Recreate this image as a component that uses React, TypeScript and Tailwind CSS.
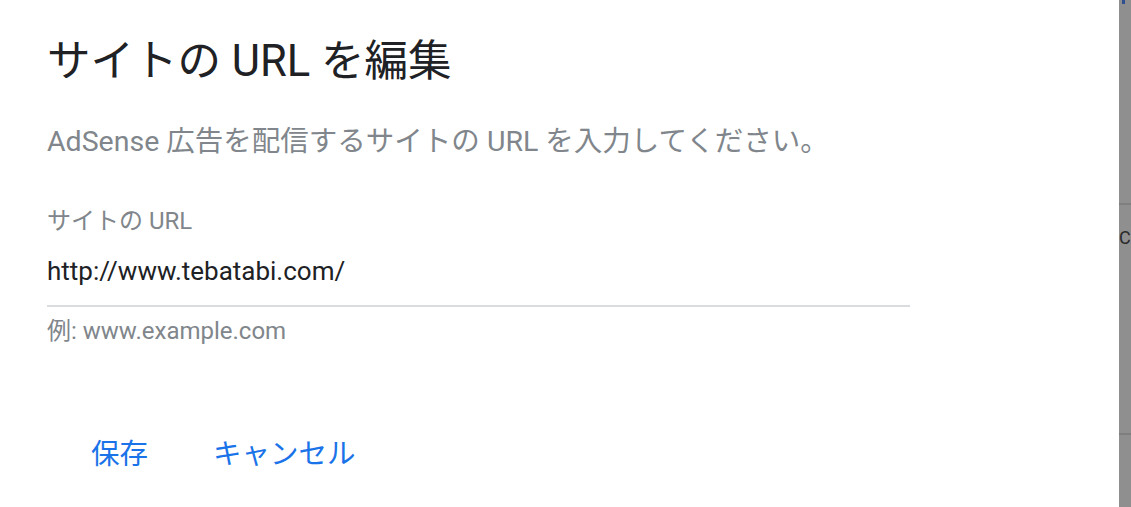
import React from "react";

const jp = "font-['Roboto','Noto_Sans_CJK_JP',sans-serif]";

const EditSiteUrlDialog = () => {
  return (
    <div className={`flex-1 bg-white pl-[47px] pt-[38px] ${jp}`}>
      <h1 className="text-[43.5px] leading-[48px] font-normal text-[#202124]">
        サイトの URL を編集
      </h1>
      <p className="mt-[38px] text-[28.5px] leading-[36px] text-[#80868b]">
        AdSense 広告を配信するサイトの URL を入力してください。
      </p>

      <div className="mt-[47px] w-[863px]">
        <label className="block text-[24px] leading-[28px] text-[#80868b]">
          サイトの URL
        </label>
        <div className="mt-[20px] border-b-2 border-[#dadce0] pb-[18px] text-[26px] leading-[32px] text-[#202124]">
          http://www.tebatabi.com/
        </div>
        <p className="mt-[10px] text-[24px] leading-[28px] text-[#80868b]">
          例: www.example.com
        </p>
      </div>

      <div className="mt-[92px] ml-[44px] flex items-center gap-[65px] text-[28.5px] leading-[36px] text-[#1a73e8]">
        <button type="button">保存</button>
        <button type="button">キャンセル</button>
      </div>
    </div>
  );
};

const App = () => {
  return (
    <div className="flex h-screen w-full overflow-hidden">
      <EditSiteUrlDialog />
      {/* page behind the dialog, under the dark overlay */}
      <div className="relative w-[12px] bg-[#8f8f8f]">
        <div className="absolute left-[3px] top-0 h-[4px] w-[3px] bg-[#2f4f8f]" />
        <div className="mt-[203px] h-[2px] bg-[#7f7f7f]" />
        <div className="mt-[22px] font-['Roboto',sans-serif] text-[18px] leading-[22px] text-[#2a2a2a]">
          C
        </div>
        <div className="mt-[184px] h-[2px] bg-[#7f7f7f]" />
      </div>
    </div>
  );
};

export default App;
